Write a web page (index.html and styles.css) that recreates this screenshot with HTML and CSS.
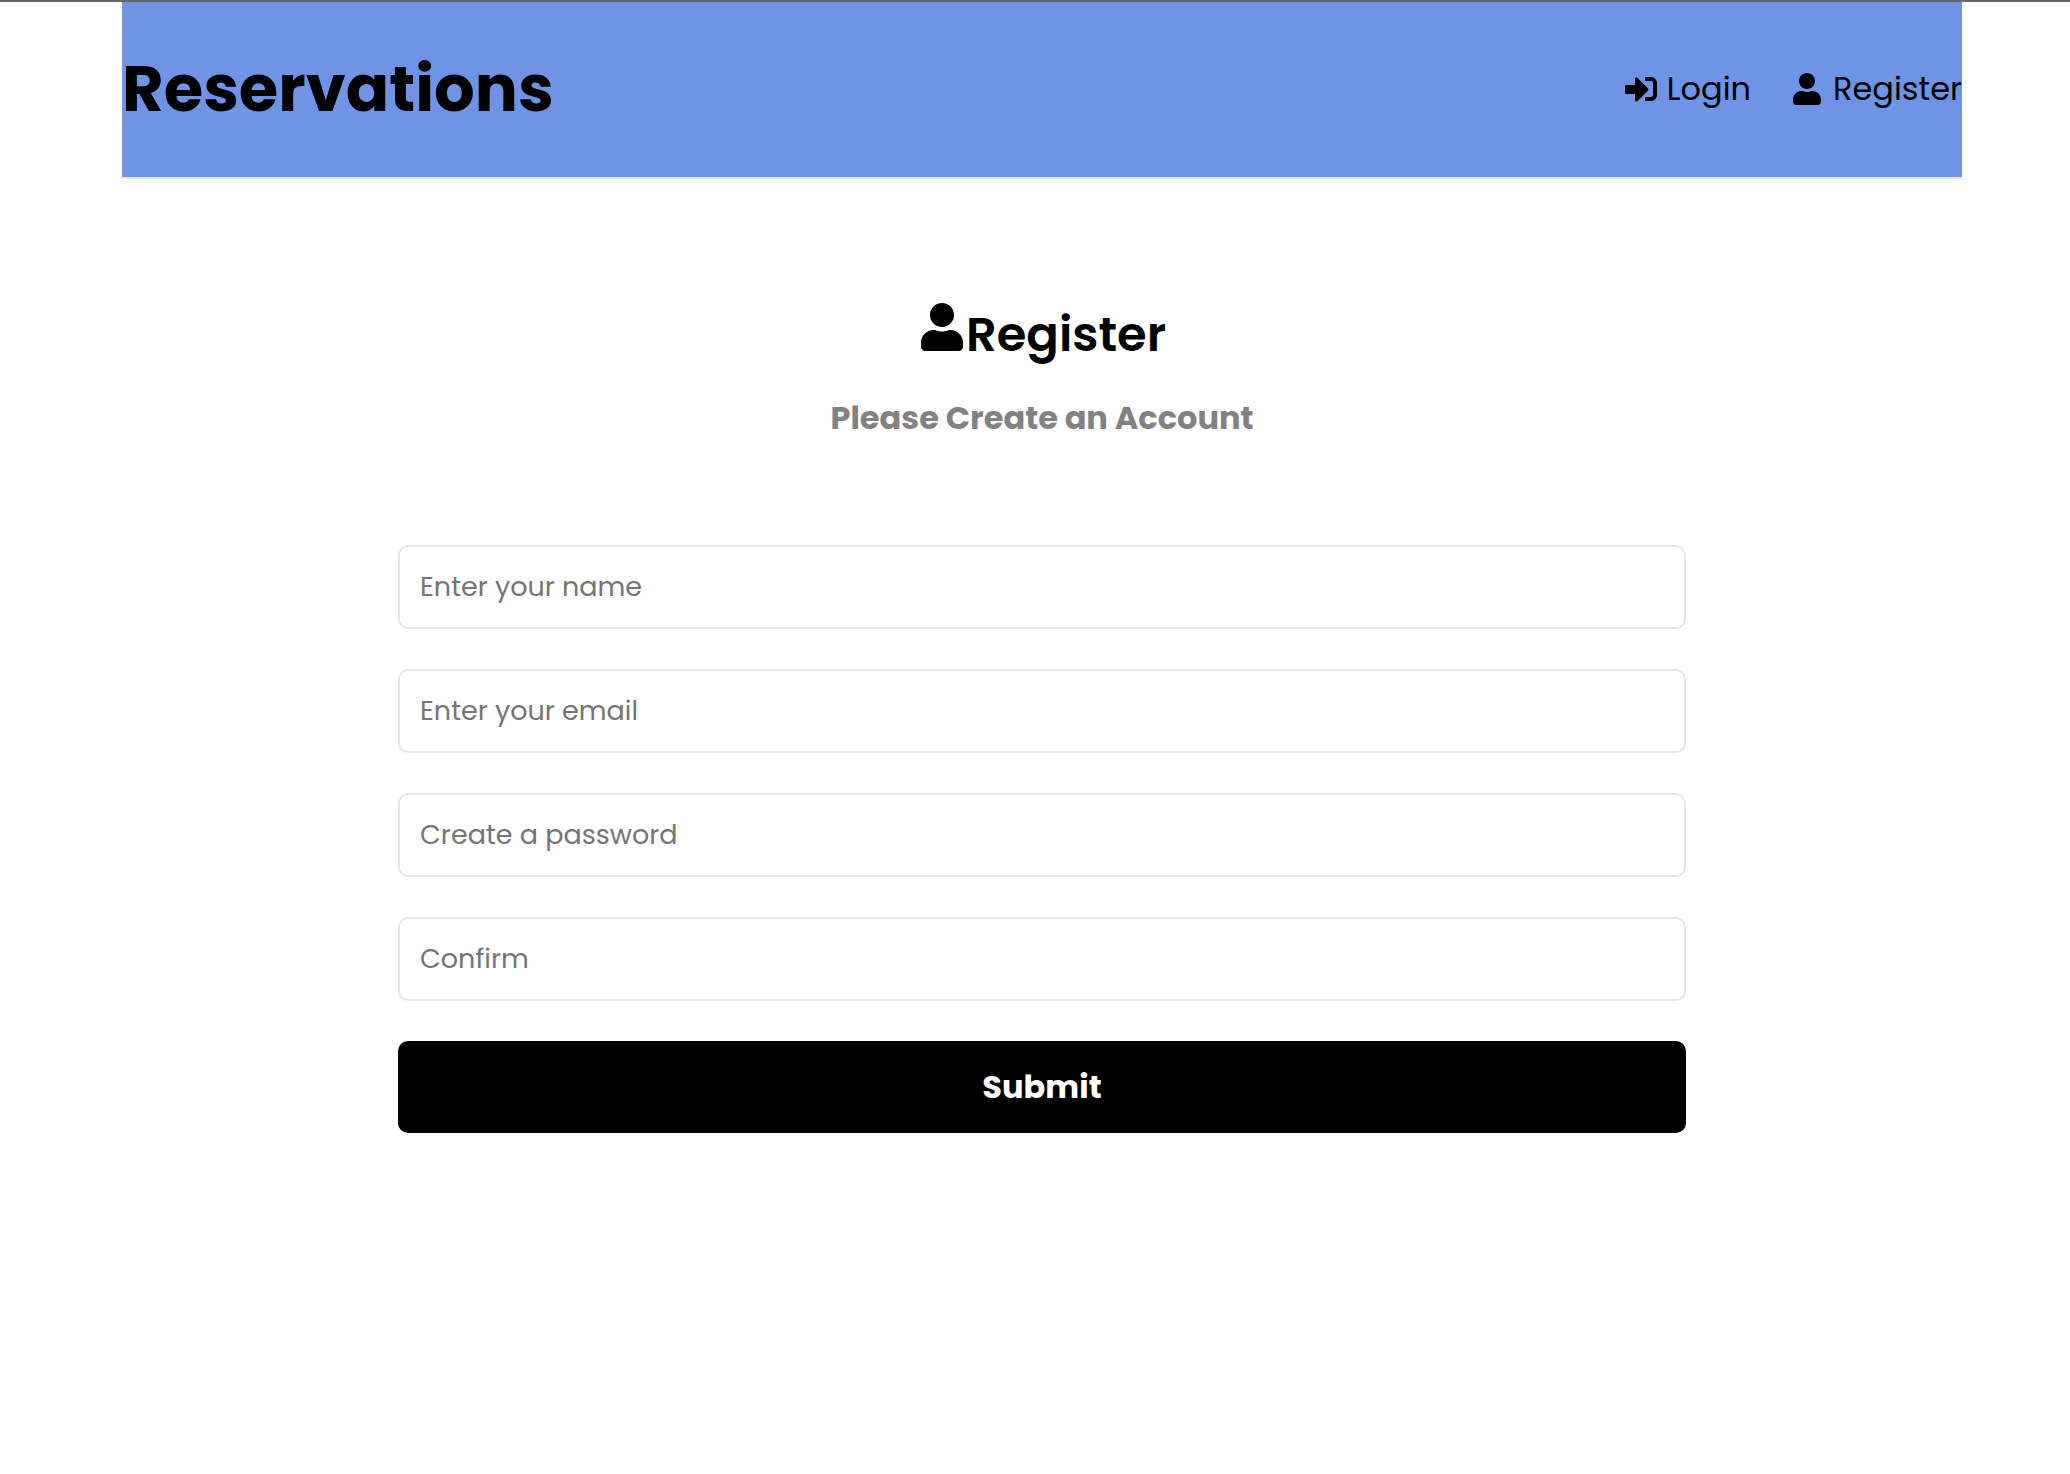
FILE: index.html
```html
<!DOCTYPE html>
<html lang="en">
<head>
<meta charset="utf-8">
<meta name="viewport" content="width=device-width, initial-scale=1">
<title>Reservations</title>
<link rel="stylesheet" href="styles.css">
</head>
<body>
<svg class="sprite" aria-hidden="true">
  <symbol id="icon-user" viewBox="0 0 448 512"><path d="M224 256c70.7 0 128-57.3 128-128S294.7 0 224 0 96 57.3 96 128s57.3 128 128 128zm89.6 32h-16.7c-22.2 10.2-46.9 16-72.9 16s-50.6-5.8-72.9-16h-16.7C60.2 288 0 348.2 0 422.4V464c0 26.5 21.5 48 48 48h352c26.5 0 48-21.5 48-48v-41.6c0-74.2-60.2-134.4-134.4-134.4z"/></symbol>
  <symbol id="icon-login" viewBox="0 0 512 512"><path d="M416 448h-84c-6.6 0-12-5.4-12-12v-40c0-6.6 5.4-12 12-12h84c17.7 0 32-14.3 32-32V160c0-17.7-14.3-32-32-32h-84c-6.6 0-12-5.4-12-12V76c0-6.6 5.4-12 12-12h84c53 0 96 43 96 96v192c0 53-43 96-96 96zm-47-201L201 79c-15-15-41-4.5-41 17v96H24c-13.3 0-24 10.7-24 24v96c0 13.3 10.7 24 24 24h136v96c0 21.5 26 32 41 17l168-168c9.3-9.4 9.3-24.6 0-34z"/></symbol>
</svg>
<div class="container">
  <header class="header">
    <h1 class="logo"><a href="#">Reservations</a></h1>
    <nav>
      <ul class="nav-list">
        <li><a class="nav-link" href="#login"><svg class="icon" aria-hidden="true"><use href="#icon-login"/></svg>Login</a></li>
        <li><a class="nav-link" href="#register"><svg class="icon" aria-hidden="true"><use href="#icon-user"/></svg>Register</a></li>
      </ul>
    </nav>
  </header>
  <main>
    <section class="heading">
      <h2 class="heading-title"><svg class="icon" aria-hidden="true"><use href="#icon-user"/></svg>Register</h2>
      <p class="heading-text">Please Create an Account</p>
    </section>
    <form class="form">
      <input class="field" type="text" name="name" placeholder="Enter your name" aria-label="Name">
      <input class="field" type="email" name="email" placeholder="Enter your email" aria-label="Email">
      <input class="field" type="password" name="password" placeholder="Create a password" aria-label="Password">
      <input class="field" type="password" name="confirm" placeholder="Confirm" aria-label="Confirm password">
      <button class="submit" type="submit">Submit</button>
    </form>
  </main>
</div>
</body>
</html>
```
FILE: styles.css
```css
* {
  box-sizing: border-box;
  margin: 0;
  padding: 0;
}

body {
  min-height: 100vh;
  padding-left: 14px;
  border-top: 2px solid #666;
  background: #fff;
  color: #000;
  font-family: Poppins, Inter, "Open Sans", sans-serif;
}

a {
  color: inherit;
  text-decoration: none;
}

.sprite {
  display: none;
}

.icon {
  width: 1em;
  height: 1em;
  fill: currentColor;
}

.container {
  width: 90%;
  max-width: 1840px;
  margin: 0 auto;
}

.header {
  display: flex;
  justify-content: space-between;
  align-items: center;
  padding: 47px 0 48px;
  border-bottom: 2px solid #e6e6e6;
  background: #6f94e5;
}

.logo {
  font-size: 64px;
  font-weight: 700;
  line-height: 80px;
}

.nav-list {
  display: flex;
  gap: 40px;
  list-style: none;
}

.nav-link {
  display: flex;
  align-items: center;
  gap: 10px;
  font-size: 32px;
  line-height: 40px;
}

.heading {
  display: flex;
  flex-direction: column;
  align-items: center;
  gap: 33px;
  padding: 124px 0 107px;
  text-align: center;
}

.heading-title {
  font-size: 48px;
  font-weight: 600;
  line-height: 60px;
}

.heading-text {
  color: #828282;
  font-size: 32px;
  font-weight: 700;
  line-height: 40px;
}

.form {
  display: flex;
  flex-direction: column;
  gap: 40px;
  width: 70%;
  margin: 0 auto;
}

.field,
.submit {
  width: 100%;
  border-radius: 10px;
  font-family: inherit;
}

.field {
  height: 84px;
  padding: 20px;
  border: 2px solid #e6e6e6;
  background: #fff;
  font-size: 27px;
  line-height: 40px;
}

.field::placeholder {
  color: #757575;
}

.submit {
  padding: 26px 20px;
  border: 0;
  background: #000;
  color: #fff;
  font-size: 32px;
  font-weight: 700;
  line-height: 40px;
}
```
